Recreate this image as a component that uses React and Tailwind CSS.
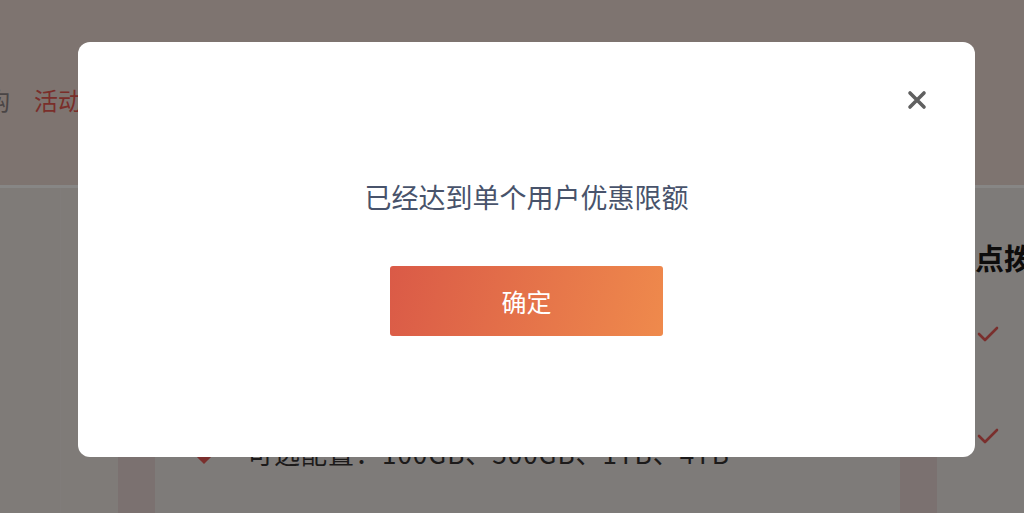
import React from "react";

const font = { fontFamily: '"Noto Sans CJK SC", "Noto Sans", sans-serif' };

function Check() {
  return (
    <svg width="22" height="18" viewBox="0 0 22 18" fill="none">
      <path d="M2 8 L8 14 L20 2" stroke="#7a2f2d" strokeWidth="2.6" strokeLinecap="round" strokeLinejoin="round" />
    </svg>
  );
}

export default function App() {
  return (
    <div className="relative w-[1024px] h-[513px] overflow-hidden bg-[#7f7b78]" style={font}>
      {/* page underneath (already dimmed by the modal overlay) */}
      <div className="flex flex-col h-full">
        <header className="h-[185px] shrink-0 bg-[#7e7470] flex items-start pt-[86px]">
          <div className="flex items-center gap-[24px] -ml-[14px] text-[24px] leading-[28px]">
            <span className="text-[#4a4545]">构</span>
            <span className="text-[#7a2e2a]">活动</span>
          </div>
        </header>
        <div className="h-[3px] shrink-0 bg-[#878685]" />
        <div className="flex flex-1 min-h-0">
          <div className="w-[60px] bg-[#7f7b78]" />
          <div className="w-[58px] bg-[#7f7b78] border-l border-[#807c7a]" />
          <div className="w-[37px] bg-[#7b7170]" />
          <div className="flex-1 bg-[#7e7b79] flex flex-col justify-end pb-[45px] pl-[44px]">
            <div className="flex items-center gap-[38px] text-[26px] leading-[30px] tracking-[1px] text-[#1c1a1a]">
              <span className="w-[10px] h-[10px] rotate-45 bg-[#7a2f2d] mt-[8px]" />
              <span>可选配置：100GB、500GB、1TB、4TB</span>
            </div>
          </div>
          <div className="w-[37px] bg-[#7b7170]" />
          <div className="w-[87px] bg-[#7e7b79] flex flex-col pl-[38px] pt-[52px]">
            <div className="text-[29px] font-bold leading-[34px] text-[#0d0c0c] whitespace-nowrap">点拨</div>
            <div className="mt-[52px] pl-[2px]"><Check /></div>
            <div className="mt-[84px] pl-[2px]"><Check /></div>
          </div>
        </div>
      </div>

      {/* modal */}
      <div className="absolute left-[78px] top-[42px] w-[897px] h-[415px] rounded-[12px] bg-white flex flex-col items-center">
        <button className="absolute right-[48px] top-[48px] w-[20px] h-[20px] flex items-center justify-center">
          <svg width="20" height="20" viewBox="0 0 20 20">
            <path d="M3 3 L17 17 M17 3 L3 17" stroke="#606060" strokeWidth="3.6" strokeLinecap="round" />
          </svg>
        </button>
        <div className="mt-[137px] text-[27px] leading-[36px] text-[#48536b] whitespace-nowrap">
          已经达到单个用户优惠限额
        </div>
        <button className="mt-[51px] w-[273px] h-[70px] rounded-[3px] bg-[linear-gradient(105deg,#da5a47,#ef8a4c)] text-white text-[25px] leading-none flex items-center justify-center">
          确定
        </button>
      </div>
    </div>
  );
}
